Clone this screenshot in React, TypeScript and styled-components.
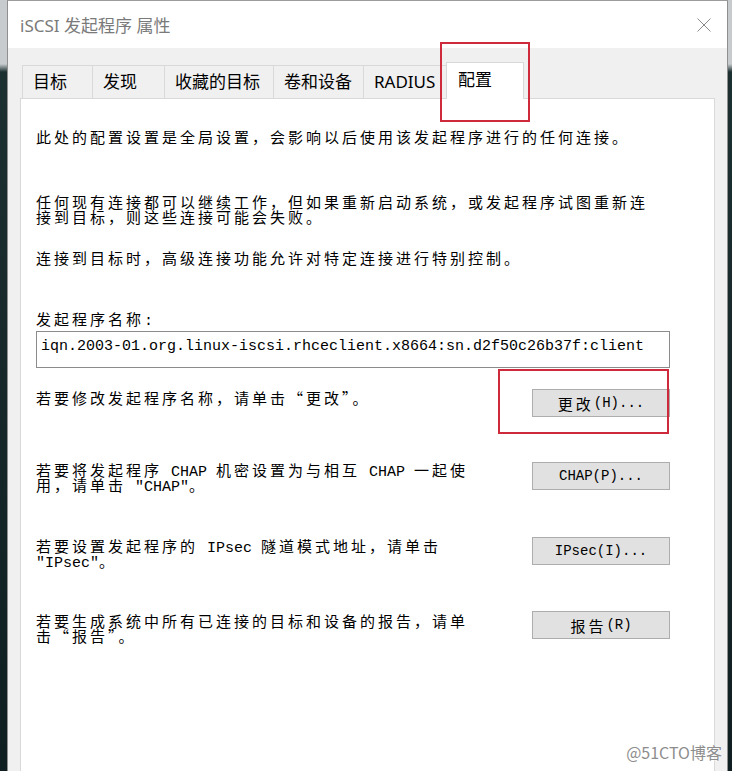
import React from 'react';
import styled, { createGlobalStyle } from 'styled-components';

const GlobalStyle = createGlobalStyle`
  html, body {
    margin: 0;
    padding: 0;
  }
  body {
    background: #132426;
    font-family: "Noto Sans CJK SC", sans-serif;
  }
`;

const Page = styled.div`
  position: relative;
  display: flex;
  width: 732px;
  height: 771px;
  overflow: hidden;
  background: #132426;
`;

const DesktopEdge = styled.div<{ $w: number }>`
  width: ${p => p.$w}px;
  flex-shrink: 0;
  background: linear-gradient(#c7cbce 0, #c7cbce 64px, #1c2f31 72px, #0f1f21 100%);
`;

const Window = styled.div`
  flex: 1;
  display: flex;
  flex-direction: column;
  min-width: 0;
  background: #f0f0f0;
  border-top: 1px solid #9c9c9c;
  border-left: 1px solid #8f8f8f;
  border-right: 1px solid #8f8f8f;
`;

const TitleBar = styled.div`
  display: flex;
  align-items: center;
  justify-content: space-between;
  height: 47px;
  padding: 0 16px 0 12px;
  background: #fff;
  flex-shrink: 0;
`;

const Title = styled.span`
  font-family: "Noto Sans", "Noto Sans CJK SC", sans-serif;
  font-size: 17px;
  color: #7a7a7a;
`;

const CloseIcon = () => (
  <svg width="14" height="14" viewBox="0 0 14 14">
    <path d="M0.5 0.5 L13.5 13.5 M13.5 0.5 L0.5 13.5" stroke="#8a8a8a" strokeWidth="1" fill="none" />
  </svg>
);

const Body = styled.div`
  flex: 1;
  display: flex;
  flex-direction: column;
  min-height: 0;
  padding: 14px 12px 0 12px;
`;

const TabRow = styled.div`
  display: flex;
  align-items: flex-end;
  height: 36px;
  padding-left: 2px;
  flex-shrink: 0;
`;

const Tab = styled.div<{ $w: number; $active?: boolean }>`
  position: relative;
  box-sizing: border-box;
  width: ${p => p.$w}px;
  height: ${p => (p.$active ? 37 : 33)}px;
  margin-left: -1px;
  margin-bottom: ${p => (p.$active ? -1 : 0)}px;
  padding-left: ${p => (p.$active ? 11 : 10)}px;
  border: 1px solid #d9d9d9;
  border-bottom: none;
  background: ${p => (p.$active ? '#fff' : '#f0f0f0')};
  z-index: ${p => (p.$active ? 1 : 0)};
  font-family: "Noto Sans", "Noto Sans CJK SC", sans-serif;
  font-size: 17px;
  line-height: ${p => (p.$active ? 34 : 32)}px;
  color: #000;
  white-space: nowrap;
  overflow: hidden;

  &:first-child {
    margin-left: 0;
  }
`;

const ActiveTab = styled(Tab)`
  overflow: visible;
`;

const Mark = styled.div<{ $t: number; $l: number; $r: number; $b: number }>`
  position: absolute;
  top: ${p => p.$t}px;
  left: ${p => p.$l}px;
  right: ${p => p.$r}px;
  bottom: ${p => p.$b}px;
  border: 2px solid #cf2a3b;
  pointer-events: none;
  z-index: 2;
`;

const Panel = styled.div`
  position: relative;
  flex: 1;
  display: flex;
  flex-direction: column;
  padding: 0 44px 0 15px;
  background: #fff;
  border: 1px solid #d9d9d9;
  border-bottom: none;
`;

const Latin = styled.span<{ $size?: number }>`
  font-family: "Liberation Mono", monospace;
  font-size: ${p => p.$size ?? 15}px;
  letter-spacing: 0;
`;

const Han = styled.span`
  font-size: 15px;
  letter-spacing: 3px;
`;

const Para = styled.div<{ $top: number }>`
  margin-top: ${p => p.$top}px;
  font-size: 15px;
  line-height: 15px;
  letter-spacing: 3px;
  color: #000;
  white-space: nowrap;

  ${Latin} {
    line-height: 0;
  }
`;

const NameInput = styled.input`
  box-sizing: border-box;
  width: 100%;
  height: 37px;
  margin: 5px 0 0 0;
  padding: 0 4px 7px 4px;
  border: 1px solid #8c8c8c;
  outline: none;
  background: #fff;
  font-family: "Liberation Mono", monospace;
  font-size: 15px;
  color: #000;
`;

const ActionRow = styled.div<{ $top: number }>`
  display: flex;
  justify-content: space-between;
  align-items: flex-start;
  margin-top: ${p => p.$top}px;
`;

const Button = styled.button`
  position: relative;
  display: flex;
  align-items: center;
  justify-content: center;
  box-sizing: border-box;
  width: 138px;
  height: 28px;
  padding: 0;
  background: #e1e1e1;
  border: 1px solid #adadad;
  font-family: "Noto Sans CJK SC", sans-serif;
  color: #000;
  flex-shrink: 0;
`;

const Watermark = styled.div`
  position: absolute;
  right: 10px;
  bottom: 7px;
  font-size: 16px;
  color: #8d8d8d;
  text-shadow: 0 0 2px #fff, 0 0 2px #fff;
  z-index: 3;
`;

const tabs = [
  { label: '目标', w: 71 },
  { label: '发现', w: 73 },
  { label: '收藏的目标', w: 110 },
  { label: '卷和设备', w: 91 },
  { label: 'RADIUS', w: 84 },
];

export default function App() {
  return (
    <Page>
      <GlobalStyle />
      <DesktopEdge $w={7} />
      <Window>
        <TitleBar>
          <Title>iSCSI 发起程序 属性</Title>
          <CloseIcon />
        </TitleBar>
        <Body>
          <TabRow>
            {tabs.map(t => (
              <Tab key={t.label} $w={t.w}>{t.label}</Tab>
            ))}
            <ActiveTab $w={78} $active>
              配置
              <Mark $t={-21} $l={-7} $r={-7} $b={-23} />
            </ActiveTab>
          </TabRow>
          <Panel>
            <Para $top={30}>此处的配置设置是全局设置，会影响以后使用该发起程序进行的任何连接。</Para>
            <Para $top={50}>
              任何现有连接都可以继续工作，但如果重新启动系统，或发起程序试图重新连
              <br />
              接到目标，则这些连接可能会失败。
            </Para>
            <Para $top={26}>连接到目标时，高级连接功能允许对特定连接进行特别控制。</Para>
            <Para $top={46}>发起程序名称<Latin>:</Latin></Para>
            <NameInput readOnly value="iqn.2003-01.org.linux-iscsi.rhceclient.x8664:sn.d2f50c26b37f:client" />

            <ActionRow $top={21}>
              <Para $top={1}>若要修改发起程序名称，请单击“更改”。</Para>
              <Button>
                <Han>更改</Han><Latin $size={14}>(H)...</Latin>
                <Mark $t={-21} $l={-35} $r={0} $b={-18} />
              </Button>
            </ActionRow>

            <ActionRow $top={45}>
              <Para $top={0}>
                若要将发起程序<Latin> CHAP </Latin>机密设置为与相互<Latin> CHAP </Latin>一起使
                <br />
                用，请单击<Latin> "CHAP"</Latin>。
              </Para>
              <Button>
                <Latin $size={14}>CHAP(P)...</Latin>
              </Button>
            </ActionRow>

            <ActionRow $top={45}>
              <Para $top={1}>
                若要设置发起程序的<Latin> IPsec </Latin>隧道模式地址，请单击
                <br />
                <Latin>"IPsec"</Latin>。
              </Para>
              <Button>
                <Latin $size={14}>IPsec(I)...</Latin>
              </Button>
            </ActionRow>

            <ActionRow $top={43}>
              <Para $top={2}>
                若要生成系统中所有已连接的目标和设备的报告，请单
                <br />
                击“报告”。
              </Para>
              <Button>
                <Han>报告</Han><Latin $size={14}>(R)</Latin>
              </Button>
            </ActionRow>
          </Panel>
        </Body>
      </Window>
      <DesktopEdge $w={4} />
      <Watermark>@51CTO博客</Watermark>
    </Page>
  );
}
